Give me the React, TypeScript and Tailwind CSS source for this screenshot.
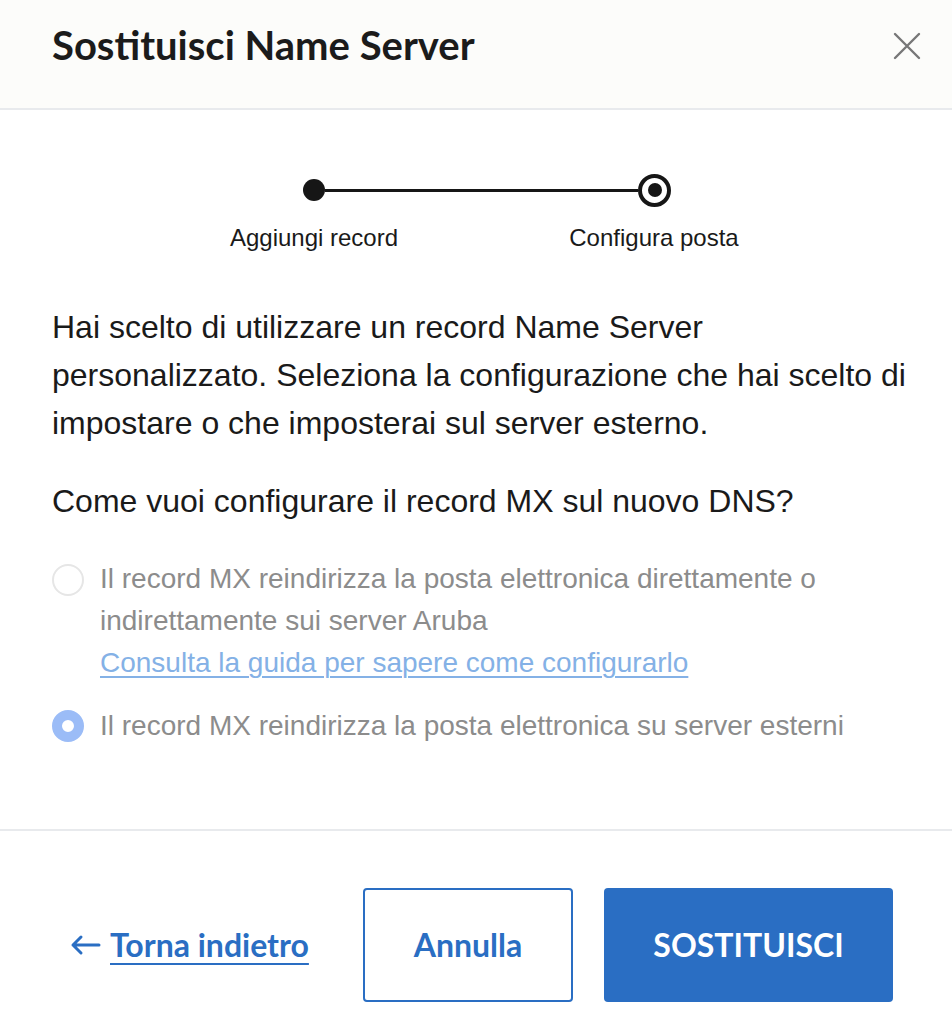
import React from 'react';

const lato = { fontFamily: 'Lato, "Noto Sans", sans-serif' };

function Stepper() {
  return (
    <div className="ml-[177px] w-[510px]">
      <div className="flex items-center pl-[74px] pr-[68px] h-[34px]">
        <div className="w-[22px] h-[22px] rounded-full bg-[#161616] shrink-0" />
        <div className="flex-1 h-[3px] bg-[#161616]" />
        <div className="w-[33px] h-[33px] rounded-full border-4 border-[#161616] flex items-center justify-center shrink-0">
          <div className="w-[14px] h-[14px] rounded-full bg-[#161616]" />
        </div>
      </div>
      <div className="grid grid-cols-3 mt-[15px] text-[24px] leading-[32px] text-[#1a1a1a]">
        <div className="text-center">Aggiungi record</div>
        <div />
        <div className="text-center">Configura posta</div>
      </div>
    </div>
  );
}

export default function App() {
  return (
    <div className="w-[952px] h-[1026px] bg-white overflow-hidden" style={{ fontFamily: '"Liberation Sans", Arial, sans-serif' }}>
      {/* header */}
      <div className="h-[110px] bg-[#fcfcfa] border-b-2 border-[#e8eaed] flex items-start justify-between pl-[52px] pr-[31px] pt-[21px]">
        <h1 className="text-[40px] font-bold text-[#1b1b1b] leading-[48px]" style={lato}>
          Sostituisci Name Server
        </h1>
        <button className="mt-[11px] w-[28px] h-[28px] text-[#777]">
          <svg viewBox="0 0 28 28" width="28" height="28" fill="none" stroke="currentColor" strokeWidth="2.4" strokeLinecap="round">
            <path d="M2 2 L26 26 M26 2 L2 26" />
          </svg>
        </button>
      </div>

      {/* body */}
      <div className="pl-[52px] pr-[40px] pt-[63px] pb-[82px] border-b-2 border-[#e8eaed]">
        <Stepper />

        <p className="mt-[49px] text-[32px] leading-[48px] text-[#1a1a1a]">
          Hai scelto di utilizzare un record Name Server personalizzato. Seleziona la configurazione che hai scelto di impostare o che imposterai sul server esterno.
        </p>

        <p className="mt-[30px] text-[32px] leading-[48px] text-[#1a1a1a]">
          Come vuoi configurare il record MX sul nuovo DNS?
        </p>

        <div className="mt-[33px] flex flex-col gap-[21px] text-[28px] leading-[42px] text-[#8c8c8c]">
          <div className="flex items-start gap-[16px]">
            <div className="mt-[6px] w-[32px] h-[32px] rounded-full border-2 border-[#e6e6e6] bg-white shrink-0" />
            <div>
              <div>Il record MX reindirizza la posta elettronica direttamente o indirettamente sui server Aruba</div>
              <a href="#" className="text-[#84b1e6] underline underline-offset-4 decoration-2">
                Consulta la guida per sapere come configurarlo
              </a>
            </div>
          </div>
          <div className="flex items-start gap-[16px]">
            <div className="mt-[5px] w-[32px] h-[32px] rounded-full border-[10px] border-[#9bbcf7] bg-white shrink-0" />
            <div>Il record MX reindirizza la posta elettronica su server esterni</div>
          </div>
        </div>
      </div>

      {/* footer */}
      <div className="flex items-center pt-[57px] pl-[70px] pr-[59px]" style={lato}>
        <a href="#" className="flex items-center gap-[9px] text-[#2a6ec3] text-[32px] font-bold">
          <svg width="31" height="22" viewBox="0 0 31 22" fill="none" stroke="currentColor" strokeWidth="3" strokeLinecap="round" strokeLinejoin="round">
            <path d="M29 11 H3 M11 3 L3 11 L11 19" />
          </svg>
          <span className="underline underline-offset-[6px] decoration-2">Torna indietro</span>
        </a>
        <div className="ml-auto flex gap-[31px]">
          <button className="w-[210px] h-[114px] rounded-[4px] border-2 border-[#2a6ec3] bg-white text-[#2a6ec3] text-[32px] font-bold">
            Annulla
          </button>
          <button className="w-[289px] h-[114px] rounded-[4px] bg-[#2a6ec3] text-white text-[32px] font-bold">
            SOSTITUISCI
          </button>
        </div>
      </div>
    </div>
  );
}
